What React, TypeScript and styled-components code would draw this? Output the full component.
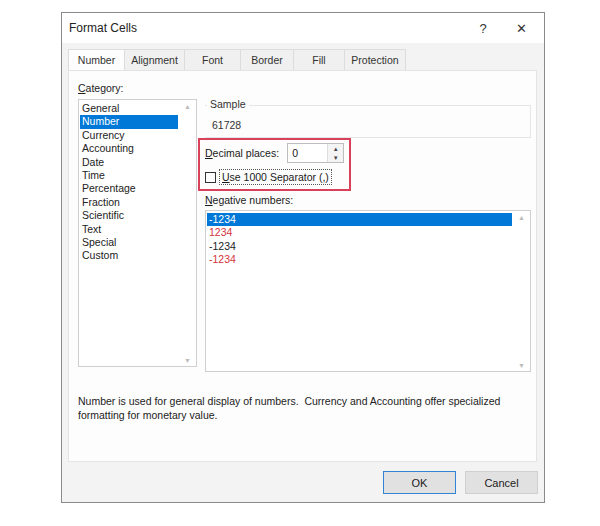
import React from "react";
import styled, { createGlobalStyle } from "styled-components";

const Global = createGlobalStyle`
  html, body { margin: 0; padding: 0; background: #fff; }
  body { font-family: "Liberation Sans", Arial, sans-serif; font-size: 10.5px; color: #1a1a1a; }
`;

const Page = styled.div`
  width: 600px; height: 526px; padding: 12px 0 0 61px; box-sizing: border-box;
`;
const Dialog = styled.div`
  width: 484px; height: 491px; box-sizing: border-box; border: 1px solid #8a8a8a;
  background: #f3f3f3; display: flex; flex-direction: column; white-space: nowrap;
`;
const TitleBar = styled.div`
  height: 30px; background: #fff; display: flex; align-items: center; padding: 0 0 0 7px;
  font-size: 12px; color: #222;
`;
const Title = styled.div` flex: 1; `;
const TitleBtn = styled.div<{ $w: number }>`
  width: ${p => p.$w}px; text-align: center; font-size: 13px; color: #333;
`;
const Tabs = styled.div` display: flex; padding: 6px 0 0 6px; height: 27px; box-sizing: border-box; `;
const Tab = styled.div<{ $w: number; $active?: boolean }>`
  width: ${p => p.$w}px; height: 21px; box-sizing: border-box; display: flex; align-items: center; justify-content: center;
  background: ${p => (p.$active ? "#fdfdfd" : "#f0f0f0")};
  border: 1px solid #dcdcdc; border-bottom: none; margin-right: -1px; color: #333;
`;
const Panel = styled.div`
  margin: 0 7px 0 6px; height: 392px; background: #fdfdfd; border: 1px solid #e3e3e3;
  box-sizing: border-box; padding: 10px 8px 0 9px; display: flex; flex-direction: column;
`;
const Columns = styled.div` display: flex; gap: 8px; `;
const Label = styled.div` height: 14px; line-height: 14px; margin-bottom: 4px; color: #222; `;
const U = styled.span` text-decoration: underline; `;
const ListBox = styled.div<{ $w: number; $h: number }>`
  position: relative; width: ${p => p.$w}px; height: ${p => p.$h}px; border: 1px solid #cfcfcf;
  box-sizing: border-box; padding: 2px 18px 0 1px; background: #fff;
`;
const Item = styled.div<{ $sel?: boolean; $red?: boolean }>`
  height: 13.4px; line-height: 13.4px; padding-left: 2px;
  background: ${p => (p.$sel ? "#0078d7" : "transparent")};
  color: ${p => (p.$sel ? "#fff" : p.$red ? "#d3343c" : "#222")};
`;
const Arrow = styled.div<{ $bottom?: boolean }>`
  position: absolute; right: 5px; ${p => (p.$bottom ? "bottom: 2px;" : "top: 3px;")}
  font-size: 7px; color: #bbb;
`;
const Right = styled.div` flex: 1; display: flex; flex-direction: column; padding-top: 24px; `;
const Fieldset = styled.div`
  height: 31px; border-top: 1px solid #e6e6e6; border-right: 1px solid #e6e6e6;
  border-bottom: 1px solid #e6e6e6; padding: 0 0 0 7px; position: relative;
`;
const Legend = styled.div` position: absolute; top: -8px; left: 2px; background: #fdfdfd; padding: 0 3px; color: #333; `;
const SampleVal = styled.div` padding-top: 13px; color: #333; `;
const RedBox = styled.div`
  margin-left: -7px; width: 153px; height: 53px; box-sizing: border-box; border: 2px solid #d9415a;
  padding: 3px 0 0 5px; display: flex; flex-direction: column; gap: 6px;
`;
const Row = styled.div` display: flex; align-items: center; `;
const NumInput = styled.div`
  margin-left: 8px; width: 57px; height: 20px; box-sizing: border-box; border: 1px solid #bdbdbd;
  display: flex; background: #fff;
`;
const NumVal = styled.div` flex: 1; padding: 3px 0 0 4px; `;
const Spin = styled.div`
  width: 15px; border-left: 1px solid #ddd; display: flex; flex-direction: column;
  font-size: 6px; color: #444; align-items: center; justify-content: space-around; background: #f4f4f4;
`;
const Check = styled.div` width: 11px; height: 11px; border: 1px solid #333; box-sizing: border-box; background: #fff; `;
const Focus = styled.div` margin-left: 3px; border: 1px dotted #555; padding: 0 2px; line-height: 14px; `;
const NegLabel = styled.div` margin: 2px 0 3px 0; height: 14px; line-height: 14px; `;
const Desc = styled.div` margin-top: 22px; line-height: 14px; color: #222; `;
const Footer = styled.div` flex: 1; display: flex; justify-content: flex-end; align-items: flex-start; gap: 9px; padding: 9px 6px 0 0; `;
const Btn = styled.div<{ $primary?: boolean }>`
  width: 73px; height: 23px; box-sizing: border-box; display: flex; align-items: center; justify-content: center;
  background: #e1e1e1; border: 1px solid ${p => (p.$primary ? "#2f84d3" : "#d0d0d0")}; color: #222; font-size: 11px;
`;

const cats = ["General","Number","Currency","Accounting","Date","Time","Percentage","Fraction","Scientific","Text","Special","Custom"];

export default function App() {
  return (
    <Page>
      <Global />
      <Dialog>
        <TitleBar>
          <Title>Format Cells</Title>
          <TitleBtn $w={30}>?</TitleBtn>
          <TitleBtn $w={46}>✕</TitleBtn>
        </TitleBar>
        <Tabs>
          <Tab $w={57} $active>Number</Tab>
          <Tab $w={61}>Alignment</Tab>
          <Tab $w={57}>Font</Tab>
          <Tab $w={54}>Border</Tab>
          <Tab $w={52}>Fill</Tab>
          <Tab $w={62}>Protection</Tab>
        </Tabs>
        <Panel>
          <Columns>
            <div>
              <Label><U>C</U>ategory:</Label>
              <ListBox $w={119} $h={268}>
                {cats.map(c => <Item key={c} $sel={c === "Number"}>{c}</Item>)}
                <Arrow>▲</Arrow>
                <Arrow $bottom>▼</Arrow>
              </ListBox>
            </div>
            <Right>
              <Fieldset>
                <Legend>Sample</Legend>
                <SampleVal>61728</SampleVal>
              </Fieldset>
              <RedBox>
                <Row>
                  <span><U>D</U>ecimal places:</span>
                  <NumInput><NumVal>0</NumVal><Spin><span>▲</span><span>▼</span></Spin></NumInput>
                </Row>
                <Row>
                  <Check />
                  <Focus><U>U</U>se 1000 Separator (,)</Focus>
                </Row>
              </RedBox>
              <NegLabel><U>N</U>egative numbers:</NegLabel>
              <ListBox $w={326} $h={162}>
                <Item $sel>-1234</Item>
                <Item $red>1234</Item>
                <Item>-1234</Item>
                <Item $red>-1234</Item>
                <Arrow>▲</Arrow>
                <Arrow $bottom>▼</Arrow>
              </ListBox>
            </Right>
          </Columns>
          <Desc>
            Number is used for general display of numbers.&nbsp; Currency and Accounting offer specialized<br />
            formatting for monetary value.
          </Desc>
        </Panel>
        <Footer>
          <Btn $primary>OK</Btn>
          <Btn>Cancel</Btn>
        </Footer>
      </Dialog>
    </Page>
  );
}
